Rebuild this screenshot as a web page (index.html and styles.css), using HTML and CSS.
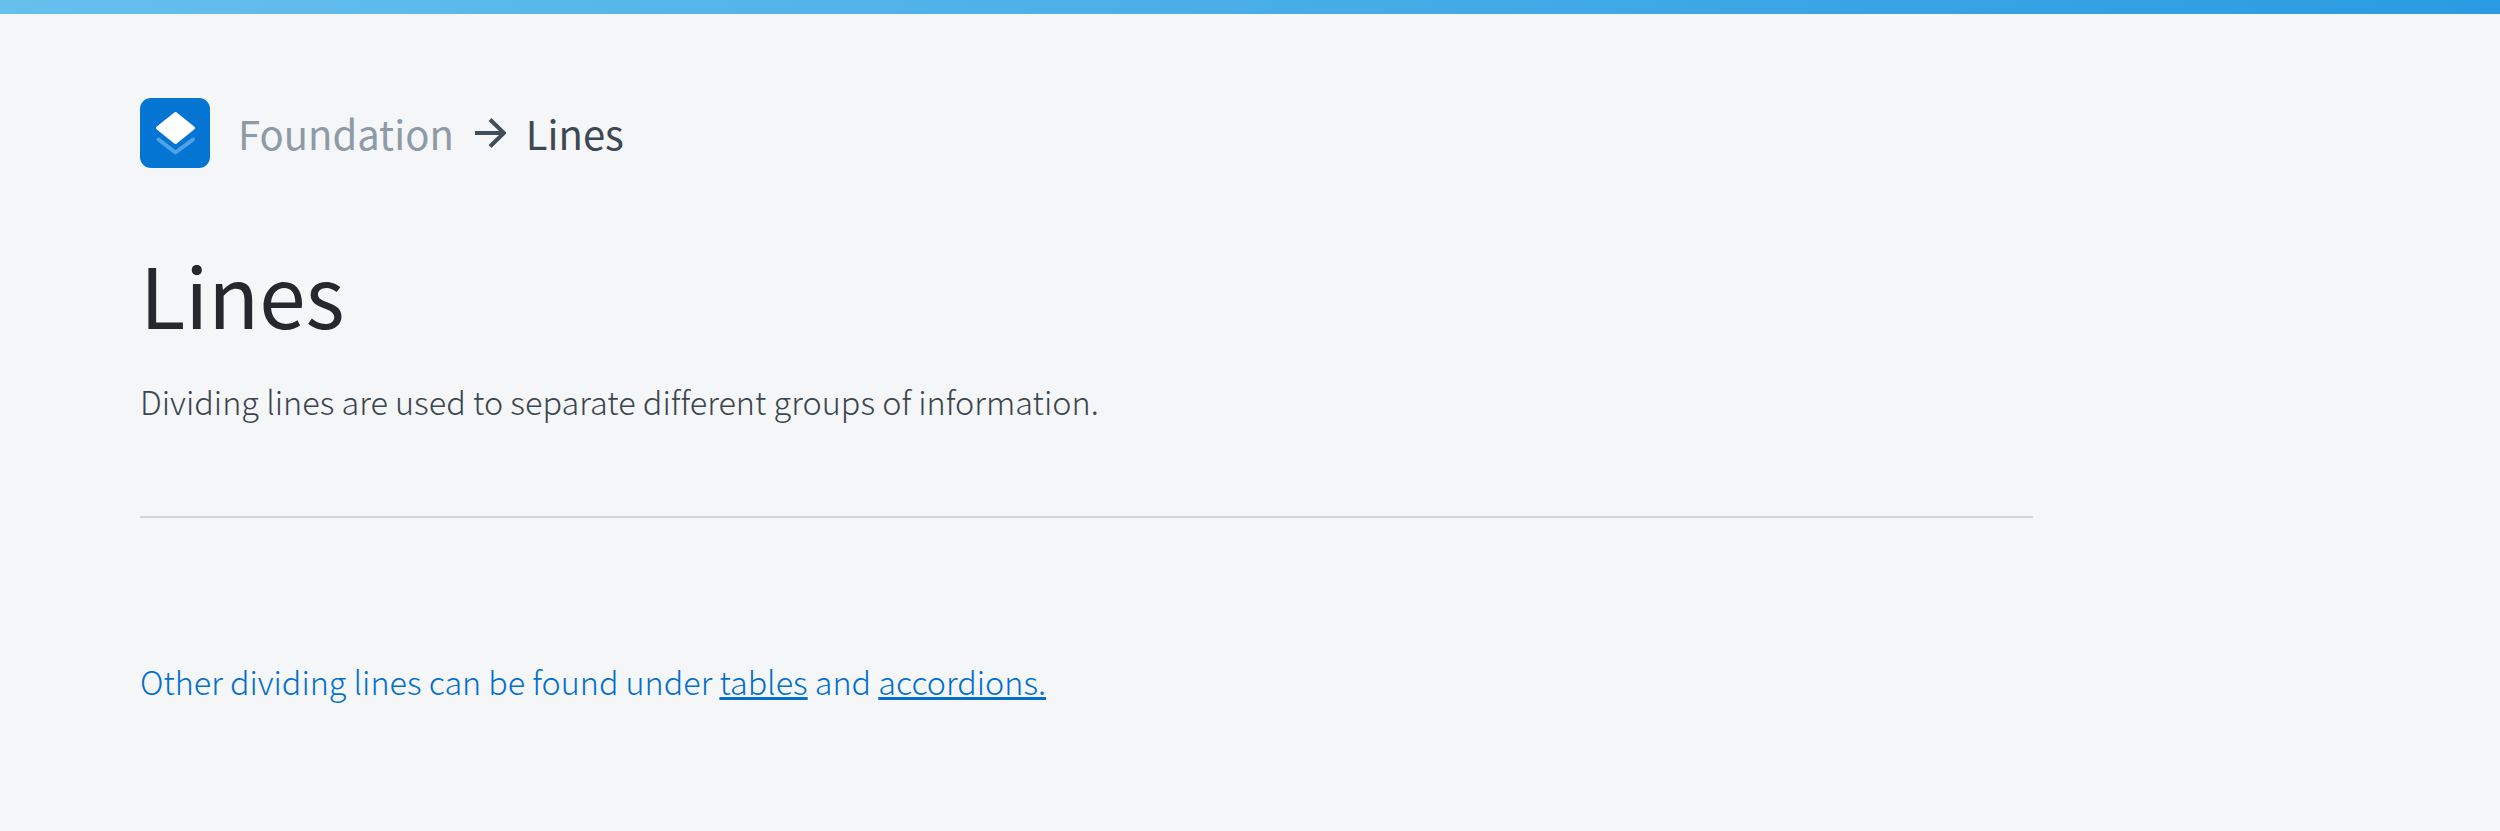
FILE: index.html
```html
<!DOCTYPE html>
<html lang="en">
<head>
<meta charset="UTF-8" />
<title>Lines</title>
<link rel="stylesheet" href="styles.css">
</head>
<body>
<div class="topbar"></div>
<div class="page">
  <nav class="crumbs">
    <svg class="logo" width="70" height="70" viewBox="0 0 70 70">
      <rect width="70" height="70" rx="11" fill="#0575d3"/>
      <path d="M18.500 41.500l17 13 17.500-13" fill="none" stroke="#4fa2e3" stroke-width="4" stroke-linecap="round" stroke-linejoin="round"/>
      <path d="M35.500 15.500L53.500 30 35.500 44.500 17.500 30z" fill="#fff" stroke="#fff" stroke-width="3" stroke-linejoin="round"/>
    </svg>
    <span class="crumb">Foundation</span>
    <svg class="arrow" width="32" height="32" viewBox="0 0 32 32">
      <path d="M1 16h28M16 2.500l14 13.500-14 13.500" fill="none" stroke="#414d58" stroke-width="4"/>
    </svg>
    <span class="crumb current">Lines</span>
  </nav>
  <h1>Lines</h1>
  <p class="lead">Dividing lines are used to separate different groups of information.</p>
  <hr class="divider">
  <p class="note">Other dividing lines can be found under <a href="#">tables</a> and <a href="#">accordions.</a></p>
</div>
</body>
</html>
```
FILE: styles.css
```css
* {
  box-sizing: border-box;
}
body {
  margin: 0;
  background: #f5f6f8;
  font-family: 'Noto Sans CJK SC', 'Noto Sans', sans-serif;
  font-variant-ligatures: none;
  color: #414d58;
}
.topbar {
  height: 14px;
  background: linear-gradient(90deg, #66c0ee, #2a9be2);
}
.page {
  width: 1893px;
  margin-left: 140px;
  padding-top: 84px;
}
.crumbs {
  display: flex;
  align-items: center;
  height: 70px;
}
.logo {
  margin-right: 28px;
}
.crumb {
  font-size: 40px;
  color: #8e9ba7;
}
.crumb.current {
  color: #3d4852;
}
.arrow {
  margin: 0 20px;
}
h1 {
  margin: 70px 0 0;
  font-size: 83.5px;
  font-weight: 400;
  line-height: 110px;
  color: #25292d;
}
.lead {
  margin: 31px 0 0;
  font-size: 32.4px;
  font-weight: 300;
  line-height: 44px;
  color: #3a4650;
}
.divider {
  margin: 93px 0 0;
  border: 0;
  border-top: 2px solid #d4d6d9;
}
.note {
  margin: 141px 0 0;
  font-size: 32.3px;
  font-weight: 300;
  line-height: 44px;
  color: #0470cc;
}
.note a {
  color: inherit;
}
```
